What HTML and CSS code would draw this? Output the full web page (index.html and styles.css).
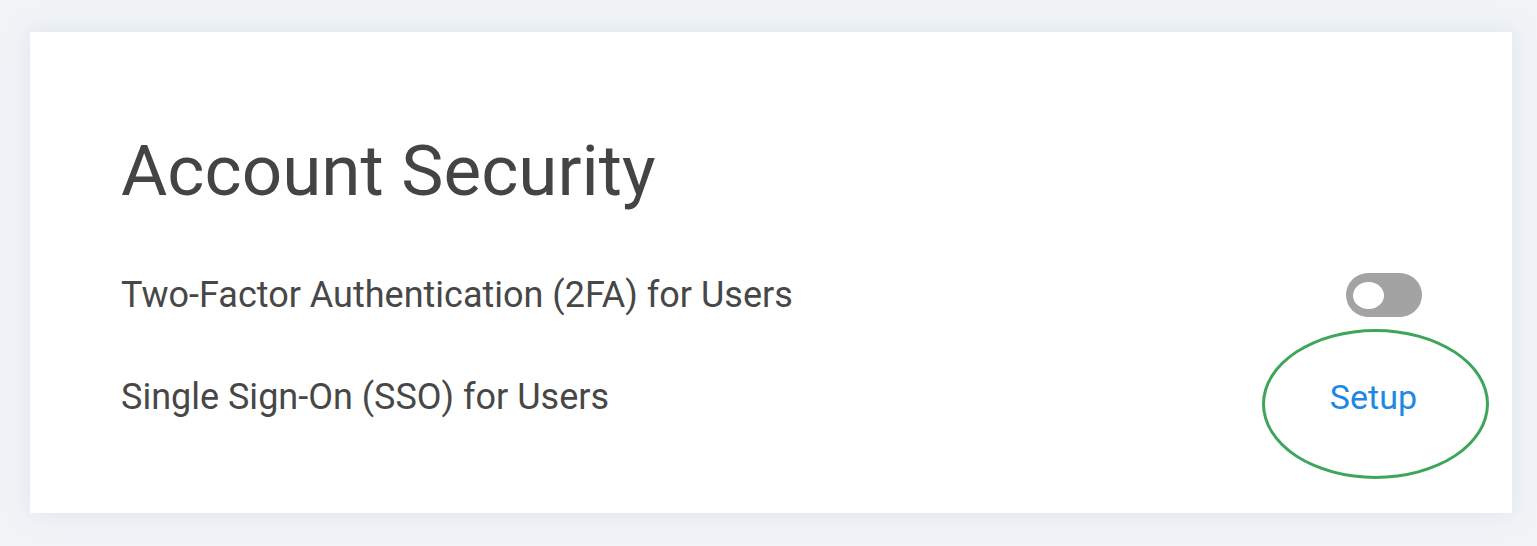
FILE: index.html
```html
<!DOCTYPE html>
<html lang="en">
<head>
<meta charset="utf-8">
<title>Account Security</title>
<link rel="stylesheet" href="styles.css">
</head>
<body>
<main class="page">
  <section class="card">
    <h1 class="title">Account Security</h1>
    <div class="rows">
      <div class="row">
        <span class="label">Two-Factor Authentication (2FA) for Users</span>
        <span class="toggle" role="switch" aria-checked="false"><span class="knob"></span></span>
      </div>
      <div class="row">
        <span class="label">Single Sign-On (SSO) for Users</span>
        <span class="action-wrap">
          <a class="action" href="#">Setup</a>
          <span class="ring"></span>
        </span>
      </div>
    </div>
  </section>
</main>
</body>
</html>
```
FILE: styles.css
```css
html, body {
  margin: 0;
  padding: 0;
}
body {
  background: #f1f4f7;
  font-family: Roboto, "Noto Sans", "Liberation Sans", sans-serif;
  width: 1537px;
  height: 546px;
  overflow: hidden;
}
.page {
  padding: 32px 25px 33px 30px;
}
.card {
  background: #ffffff;
  height: 481px;
  box-sizing: border-box;
  padding: 98px 90px 0 91px;
  box-shadow: 0 0 22px rgba(170, 188, 205, 0.28);
}
.title {
  margin: 0;
  font-size: 71px;
  font-weight: 400;
  line-height: 82px;
  color: #444444;
}
.rows {
  margin-top: 60px;
  display: flex;
  flex-direction: column;
  gap: 56px;
}
.row {
  display: flex;
  align-items: center;
  justify-content: space-between;
  height: 46px;
}
.label {
  font-size: 36px;
  line-height: 42px;
  color: #474747;
}
.toggle {
  width: 76px;
  height: 44px;
  border-radius: 22px;
  background: #a3a3a3;
  display: flex;
  align-items: center;
  padding-left: 7px;
  box-sizing: border-box;
}
.knob {
  width: 31px;
  height: 27px;
  border-radius: 50%;
  background: #ffffff;
}
.action-wrap {
  position: relative;
  display: block;
  padding-right: 5px;
}
.action {
  display: block;
  font-size: 34px;
  line-height: 38px;
  color: #1e88e5;
  text-decoration: none;
}
.ring {
  position: absolute;
  left: -68px;
  top: -49px;
  width: 227px;
  height: 150px;
  border: 3px solid #3da65a;
  border-radius: 50%;
  box-sizing: border-box;
}
```
